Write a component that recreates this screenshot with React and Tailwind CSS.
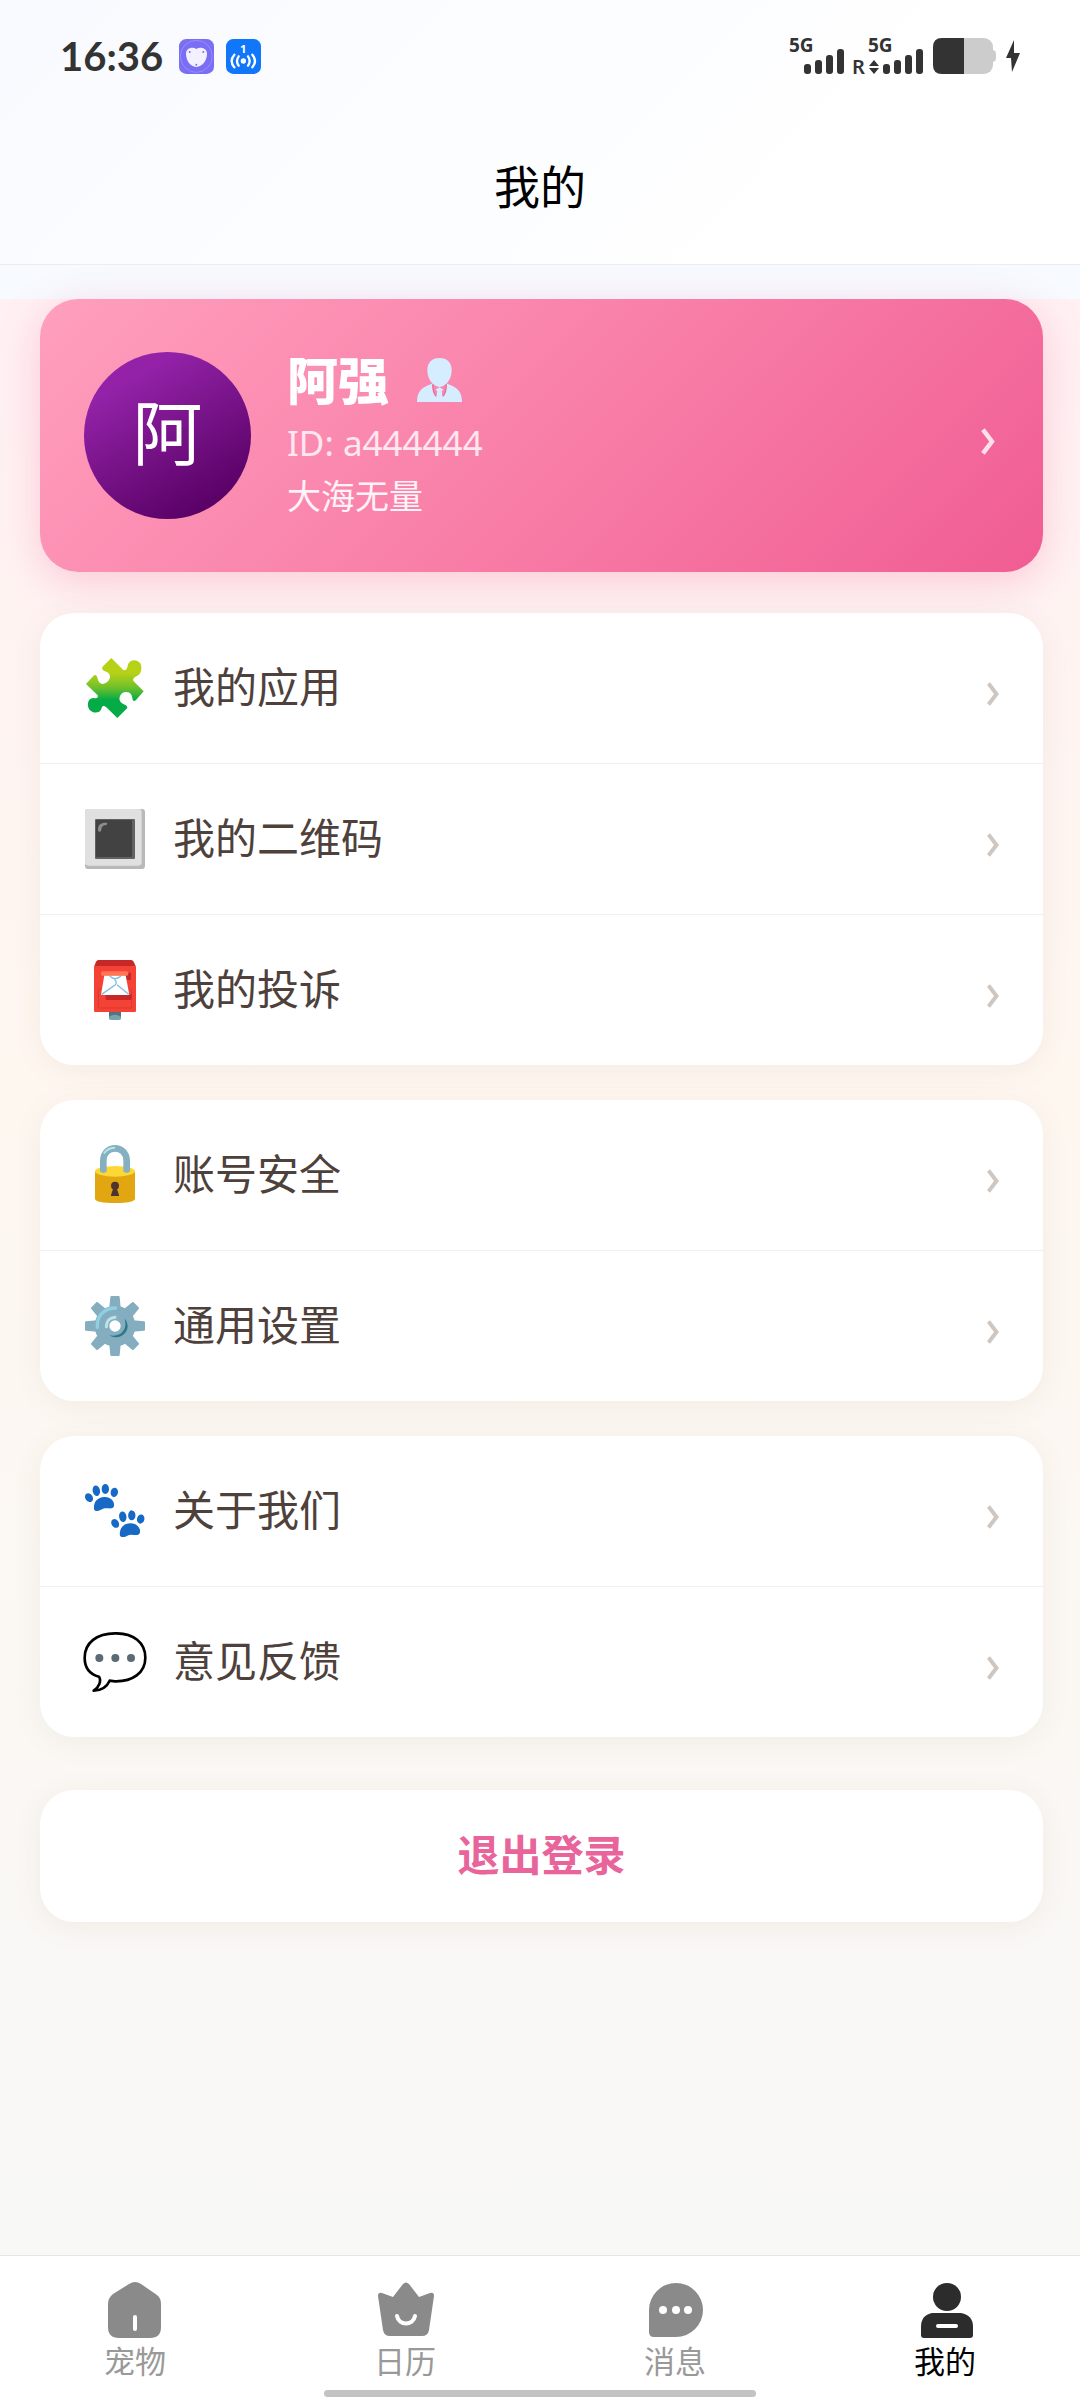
function PuzzleIcon() {
    return (
        <svg viewBox="0 0 180 180" className="size-[60px]" aria-hidden="true">
            <defs>
                <linearGradient id="puzzle" x1="0" y1="0" x2="0" y2="1">
                    <stop offset="0.25" stopColor="#b7d117" />
                    <stop offset="0.5" stopColor="#6cc02c" />
                    <stop offset="0.7" stopColor="#04ab47" />
                </linearGradient>
            </defs>
            <path
                fill="url(#puzzle)"
                d="M79 0 L52 27 C49 40 62 38 70 45 C80 54 74 70 60 76 C48 81 41 74 38 62 C36 51 31 48 25 54 L3 78 L38 112 C41 119 34 122 27 120 C8 119 4 142 14 156 C26 168 47 166 50 150 C52 141 59 143 64 148 L97 180 L127 150 C127 141 118 141 111 136 C98 127 103 108 117 103 C132 98 141 108 142 120 C143 130 147 131 153 126 L176 100 L146 70 C142 63 147 58 156 54 C170 48 172 30 166 16 C154 1 133 5 129 20 C126 35 121 39 114 35 Z"
            />
        </svg>
    );
}

function SquareIcon() {
    return (
        <svg viewBox="0 0 180 180" className="size-[60px]" aria-hidden="true">
            <rect width="180" height="180" rx="10" fill="#b9b9b9" />
            <rect width="170" height="170" rx="10" fill="#e0e0e0" />
            <rect x="30" y="30" width="120" height="120" rx="3" fill="#616161" />
            <rect x="33" y="33" width="108" height="111" rx="2" fill="#424242" />
            <path d="M39 64 C38 46 48 40 66 41 C68 46 66 48 60 49 C50 51 50 58 48 66 C45 70 40 69 39 64 Z" fill="#8c8c8c" />
        </svg>
    );
}

function PostboxIcon() {
    return (
        <svg viewBox="0 0 180 180" className="size-[60px]" aria-hidden="true">
            <path d="M72 150 H108 V178 Q90 184 72 178 Z" fill="#78a3ad" />
            <path d="M72 150 H108 V170 Q90 158 72 170 Z" fill="#4f7680" />
            <path d="M27 20 L33 5 Q36 0 42 0 H137 Q143 0 146 5 L153 20 V152 Q153 156 149 156 H31 Q27 156 27 152 Z" fill="#f44336" />
            <path d="M29 18 L34 5 Q37 0 42 0 H137 Q143 0 145 5 L151 18 Z" fill="#c62828" />
            <path d="M48 88 H40 V144 H140 V88 H134" fill="none" stroke="#d93a30" strokeWidth="3" />
            <path d="M62 103 H140 V116 Q140 120 136 120 H66 Q62 120 62 116 Z" fill="#c62828" />
            <path d="M120 38 H138 V56 Q138 60 134 60 H122 Z" fill="#c62828" />
            <path d="M58 46 H122 L133 105 H48 Z" fill="#fff" />
            <path d="M74 48 Q90 64 108 48 M88 58 Q102 70 84 79 L50 103 M96 74 L131 103" fill="none" stroke="#82bde6" strokeWidth="4" />
            <rect x="48" y="34" width="82" height="13" rx="5" fill="#ff7555" />
        </svg>
    );
}

function LockIcon() {
    return (
        <svg viewBox="0 0 180 180" className="size-[60px]" aria-hidden="true">
            <path d="M30 78 V162 Q34 174 90 174 Q146 174 150 162 V78 Z" fill="#e2a610" />
            <ellipse cx="90" cy="79" rx="60" ry="16" fill="#fdd835" />
            <path d="M55 80 V46 C56 -2 124 -2 125 46 V80" fill="none" stroke="#84b0c1" strokeWidth="20" />
            <path d="M45 79 Q55 89 65 79 M115 79 Q125 89 135 79" fill="#84b0c1" />
            <path d="M58 24 Q68 9 88 8" fill="none" stroke="#b9e4ea" strokeWidth="6" strokeLinecap="round" />
            <circle cx="90" cy="122" r="12" fill="#4e342e" />
            <path d="M86 126 H94 L102 150 V153 H78 V150 Z" fill="#4e342e" />
        </svg>
    );
}

function GearIcon() {
    return (
        <svg viewBox="0 0 180 180" className="size-[60px]" aria-hidden="true">
            <g fill="#84aec0">
                {[0, 45, 90, 135, 180, 225, 270, 315].map((angle) => (
                    <path
                        key={angle}
                        d="M72 44 L76 3 Q76 0 79 0 H101 Q104 0 104 3 L108 44 Z"
                        transform={`rotate(${angle} 90 90)`}
                    />
                ))}
            </g>
            <circle cx="90" cy="90" r="39" fill="none" stroke="#84aec0" strokeWidth="44" />
            <path d="M37 94 C34 60 58 36 92 36" fill="none" stroke="#8fd0df" strokeWidth="10" strokeLinecap="round" />
            <path d="M64 92 C64 76 74 65 90 64" fill="none" stroke="#b9e4ea" strokeWidth="9" strokeLinecap="round" />
            <path d="M119 68 C134 84 130 108 110 119 C96 127 82 124 73 118 C92 121 105 117 114 106 C122 95 123 82 119 68 Z" fill="#2f7889" />
        </svg>
    );
}

function Paw({ transform }) {
    return (
        <g transform={transform}>
            <ellipse cx="12" cy="41" rx="11" ry="14" transform="rotate(-35 12 41)" />
            <ellipse cx="34" cy="20" rx="11" ry="16" transform="rotate(-12 34 20)" />
            <ellipse cx="61" cy="15" rx="11" ry="15" />
            <ellipse cx="88" cy="25" rx="11" ry="14" transform="rotate(12 88 25)" />
            <path d="M27 74 C26 52 38 40 58 39 C76 38 90 52 87 66 C84 77 72 72 60 73 C48 75 46 81 37 81 C31 81 27 79 27 74 Z" />
        </g>
    );
}

function PawsIcon() {
    return (
        <svg viewBox="0 0 180 180" className="size-[60px]" fill="#1669c5" aria-hidden="true">
            <Paw transform="translate(0 9)" />
            <Paw transform="translate(80 86) rotate(2)" />
        </svg>
    );
}

function BubbleIcon() {
    return (
        <svg viewBox="-5 0 190 180" className="-mx-0.5 h-[60px] w-[64px]" aria-hidden="true">
            <path
                d="M90 4 C146 3 181 32 181 77 C181 123 142 149 90 148 C84 148 80 147 74 146 C66 164 50 175 26 176 C42 166 50 146 42 134 C12 126 -1 104 -1 77 C-1 32 36 4 90 4 Z"
                fill="#fff"
                stroke="#000"
                strokeWidth="8"
                strokeLinejoin="round"
            />
            <g fill="#5a6b73">
                <circle cx="43" cy="78" r="12" />
                <circle cx="91" cy="78" r="12" />
                <circle cx="138" cy="78" r="12" />
            </g>
        </svg>
    );
}

function PersonBadge() {
    return (
        <svg
            viewBox="0 0 126 134"
            preserveAspectRatio="none"
            className="h-11 w-[45px]"
            fill="#d6ecff"
            aria-label="个人"
            role="img"
        >
            <path d="M63 0 C84 0 97 13 97 38 C97 64 80 88 63 88 C46 88 29 64 29 38 C29 13 42 0 63 0 Z" />
            <path d="M44 78 C44 95 49 108 55 116 L57 102 L52 96 L63 89 L74 96 L69 102 L71 116 C77 108 82 95 82 78 C110 88 126 100 126 134 H0 C0 100 16 88 44 78 Z" />
            <path d="M55 116 L57 102 H69 L71 116 L70 134 H56 Z" />
            <path d="M44 80 C44 97 48 110 54 117 M82 80 C82 97 78 110 72 117" fill="none" stroke="#e76f9c" strokeWidth="4" />
        </svg>
    );
}

function Chevron({ className }) {
    return (
        <svg viewBox="0 0 12 24" className={className} fill="none" stroke="currentColor" strokeWidth="4" aria-hidden="true">
            <path d="M1.5 1.5 L9.5 12 L1.5 22.5" />
        </svg>
    );
}

function Signal({ roaming = false }) {
    return (
        <svg
            viewBox={roaming ? '-15 0 71 36' : '0 0 56 36'}
            className={roaming ? 'h-9 w-[71px] overflow-visible' : 'h-9 w-[56px] overflow-visible'}
            fill="#333"
            aria-hidden="true"
        >
            <text x="-1" y="14" fontSize="19" fontWeight="700" fontFamily="'Noto Sans', sans-serif">5G</text>
            {roaming && (
                <>
                    <text x="-17" y="36" fontSize="20" fontWeight="600" fontFamily="'Noto Sans', sans-serif">R</text>
                    <path d="M5 22 L10 28 H0 Z M5 36 L10 30 H0 Z" />
                </>
            )}
            <rect x="14" y="26" width="7" height="10" rx="3" />
            <rect x="25" y="22" width="7" height="14" rx="3" />
            <rect x="36" y="17" width="7" height="19" rx="3" />
            <rect x="47" y="11" width="7" height="25" rx="3" />
        </svg>
    );
}

function StatusBar() {
    return (
        <div className="flex h-28 items-center justify-between px-[60px]">
            <div className="flex items-center">
                <span className="font-['Lato'] text-[40px] leading-9 font-bold text-[#333]">16:36</span>
                <svg viewBox="0 0 105 105" className="ml-4 size-[35px]" aria-hidden="true">
                    <rect width="105" height="105" rx="22" fill="#7a6ef5" />
                    <circle cx="52" cy="52" r="48" fill="none" stroke="#a59cf8" strokeWidth="2" />
                    <path d="M52 30 C64 22 84 28 84 44 C84 62 72 82 52 84 C32 82 21 62 21 44 C21 28 40 22 52 30 Z" fill="#f3f1ff" />
                    <g fill="#7a6ef5">
                        <circle cx="32" cy="39" r="3" />
                        <circle cx="73" cy="39" r="3" />
                        <circle cx="52" cy="77" r="3" />
                    </g>
                </svg>
                <svg viewBox="0 0 105 105" className="ml-3 size-[35px] overflow-visible" aria-hidden="true">
                    <rect width="105" height="105" rx="22" fill="#1077fb" />
                    <text x="52" y="41" fontSize="34" fontWeight="700" fill="#fff" textAnchor="middle" fontFamily="'Noto Sans', sans-serif">1</text>
                    <circle cx="52" cy="66" r="8" fill="#fff" />
                    <path d="M38 52 Q28 66 38 80 M66 52 Q76 66 66 80 M25 47 Q9 66 25 85 M79 47 Q95 66 79 85" fill="none" stroke="#fff" strokeWidth="7" strokeLinecap="round" />
                </svg>
            </div>
            <div className="flex items-center">
                <Signal />
                <span className="ml-2">
                    <Signal roaming />
                </span>
                <svg viewBox="0 0 63 36" className="ml-2 h-9 w-[63px]" aria-hidden="true">
                    <rect width="60" height="36" rx="9" fill="#ccc" />
                    <path d="M59 12 Q63 12 63 16 V20 Q63 24 59 24 Z" fill="#ccc" />
                    <path d="M9 0 H31 V36 H9 Q0 36 0 27 V9 Q0 0 9 0 Z" fill="#333" />
                </svg>
                <svg viewBox="0 0 14 32" className="ml-[10px] h-8 w-[14px]" fill="#333" aria-hidden="true">
                    <path d="M8 0 L0 18 H5 L6 32 L14 13 H8 Z" />
                </svg>
            </div>
        </div>
    );
}

const groups = [
    [
        { label: '我的应用', Icon: PuzzleIcon },
        { label: '我的二维码', Icon: SquareIcon },
        { label: '我的投诉', Icon: PostboxIcon },
    ],
    [
        { label: '账号安全', Icon: LockIcon },
        { label: '通用设置', Icon: GearIcon },
    ],
    [
        { label: '关于我们', Icon: PawsIcon },
        { label: '意见反馈', Icon: BubbleIcon },
    ],
];

const tabs = [
    {
        label: '宠物',
        icon: (
            <>
                <path d="M21 2 Q27 -2 33 2 L49 13 Q53 16 53 22 V45 Q53 56 42 56 H11 Q0 56 0 45 V22 Q0 16 5 12 Z" fill="currentColor" />
                <path d="M27 35 V47" stroke="#fff" strokeWidth="4" strokeLinecap="round" />
            </>
        ),
    },
    {
        label: '日历',
        icon: (
            <>
                <path d="M25 2 Q28 -1 31 2 L41 15 L52 11 Q56 10 56 14 L51 48 Q50 54 44 54 H12 Q6 54 5 48 L0 14 Q0 10 4 11 L15 15 Z" fill="currentColor" />
                <path d="M19 34 C21 44 35 44 37 34" fill="none" stroke="#fff" strokeWidth="4" strokeLinecap="round" />
            </>
        ),
    },
    {
        label: '消息',
        icon: (
            <>
                <path d="M28 1 A27 27 0 0 1 28 55 H6 Q1 55 1 50 V28 A27 27 0 0 1 28 1 Z" fill="currentColor" />
                <g fill="#fff">
                    <circle cx="15" cy="28" r="4" />
                    <circle cx="28" cy="28" r="4" />
                    <circle cx="40" cy="28" r="4" />
                </g>
            </>
        ),
    },
    {
        label: '我的',
        active: true,
        icon: (
            <>
                <circle cx="29" cy="15" r="14" fill="currentColor" />
                <path d="M14 31 H43 Q55 33 55 45 V53 Q55 56 52 56 H6 Q3 56 3 53 V45 Q3 33 14 31 Z" fill="currentColor" />
                <path d="M20 44 H38" stroke="#fff" strokeWidth="4" strokeLinecap="round" />
            </>
        ),
    },
];

export default function App() {
    return (
        <div className="flex min-h-screen flex-col bg-[#f7faff] font-['Noto_Sans','Noto_Sans_CJK_SC',sans-serif]">
            <header className="border-b border-[#ececee] bg-linear-135 from-[#f8faff] to-white to-80%">
                <StatusBar />
                <h1 className="flex h-[152px] items-center justify-center pb-1 text-[46px] text-black">我的</h1>
            </header>

            <main className="mt-[34px] flex-1 bg-linear-to-b from-[#fff0f3] via-[#fef7f0] via-40% to-[#f8f8f7] pr-[37px] pb-10 pl-10">
                <a
                    href="#profile"
                    className="flex items-center rounded-[38px] bg-linear-135 from-[#ff9fbe] to-[#f05c93] py-[46px] pr-12 pl-11 text-white shadow-[0_10px_40px_rgba(240,98,146,0.28)]"
                >
                    <div className="flex size-[167px] items-center justify-center rounded-full bg-linear-150 from-[#9322a8] from-20% to-[#560062] to-90% pb-1 text-[70px]">
                        阿
                    </div>
                    <div className="ml-9 flex-1">
                        <div className="flex items-center gap-7">
                            <h2 className="text-[51px] leading-[70px] font-black">阿强</h2>
                            <PersonBadge />
                        </div>
                        <p className="text-[35px] leading-[56px] text-white/80">ID: a444444</p>
                        <p className="pb-1 text-[34px] leading-[51px] text-white/90">大海无量</p>
                    </div>
                    <Chevron className="mt-3 h-[27px] w-[14px] text-white/80" />
                </a>

                <nav className="mt-[41px] space-y-[35px]">
                    {groups.map((items) => (
                        <ul
                            key={items[0].label}
                            className="divide-y divide-[#efefef] overflow-hidden rounded-[34px] bg-white shadow-[0_5px_30px_rgba(120,80,50,0.07)]"
                        >
                            {items.map(({ label, Icon }) => (
                                <li key={label}>
                                    <a href="#menu" className="flex h-[150px] items-center pr-11 pl-[45px]">
                                        <Icon />
                                        <span className="ml-7 flex-1 pb-1 text-[42px] text-[#4e403b]">{label}</span>
                                        <Chevron className="mt-3 h-6 w-3 text-[#cfc6c0]" />
                                    </a>
                                </li>
                            ))}
                        </ul>
                    ))}
                </nav>

                <button
                    type="button"
                    className="mt-[53px] h-[132px] w-full rounded-[34px] bg-white pb-1 text-[42px] font-bold text-[#e8649a] shadow-[0_5px_30px_rgba(120,80,50,0.07)]"
                >
                    退出登录
                </button>
            </main>

            <footer className="border-t border-[#e6e6e6] bg-white">
                <nav className="grid grid-cols-4 pt-[25px]">
                    {tabs.map(({ label, icon, active }) => (
                        <a
                            key={label}
                            href="#tab"
                            className={`flex flex-col items-center ${active ? 'text-[#2c2c2c]' : 'text-[#8a8a8a]'}`}
                        >
                            <svg viewBox="-2 -1 58 58" className="size-[58px]" aria-hidden="true">
                                {icon}
                            </svg>
                            <span className={`text-[31px] leading-[44px] ${active ? 'text-black' : 'text-[#999]'}`}>
                                {label}
                            </span>
                        </a>
                    ))}
                </nav>
                <div className="mx-auto mt-[7px] mb-[3px] h-[7px] w-2/5 rounded-full bg-[#c3c3c3]" />
            </footer>
        </div>
    );
}
